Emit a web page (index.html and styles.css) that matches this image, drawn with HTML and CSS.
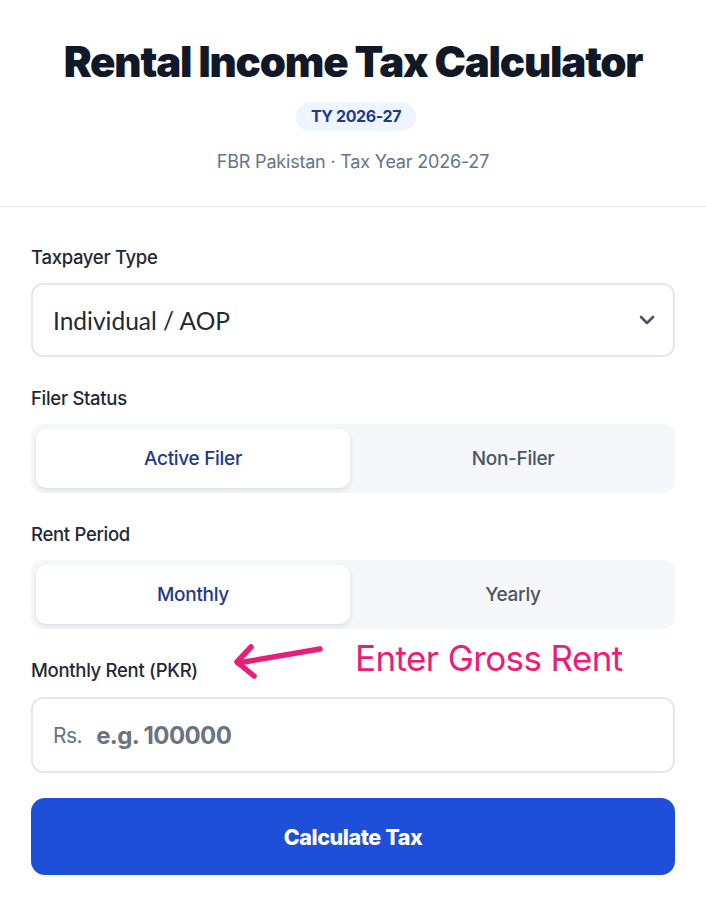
FILE: index.html
```html
<!DOCTYPE html>
<html lang="en">

<head>
    <meta charset="UTF-8">
    <meta name="viewport" content="width=device-width, initial-scale=1.0">
    <title>Rental Income Tax Calculator</title>
    <link rel="stylesheet" href="styles.css">
</head>

<body>
    <div class="header">
        <h1>Rental Income Tax Calculator</h1>
        <span class="badge">TY 2026-27</span>
        <p class="sub">FBR Pakistan · Tax Year 2026-27</p>
    </div>

    <form class="calc">
        <div class="field">
            <label class="lbl" for="type">Taxpayer Type</label>
            <div class="select">
                <span>Individual / AOP</span>
                <svg width="18" height="12" viewBox="0 0 18 12">
                    <path d="M3 3 L9 9 L15 3" fill="none" stroke="#4b5563" stroke-width="2.6" stroke-linecap="round" stroke-linejoin="round" />
                </svg>
            </div>
        </div>

        <div class="field">
            <div class="lbl">Filer Status</div>
            <div class="seg">
                <button type="button" class="opt active">Active Filer</button>
                <button type="button" class="opt">Non-Filer</button>
            </div>
        </div>

        <div class="field">
            <div class="lbl">Rent Period</div>
            <div class="seg">
                <button type="button" class="opt active">Monthly</button>
                <button type="button" class="opt">Yearly</button>
            </div>
        </div>

        <div class="field last">
            <div class="lbl rentlbl">
                Monthly Rent (PKR)
                <div class="hint">
                    <svg width="92" height="40" viewBox="0 0 92 40">
                        <path d="M87 6 L5 20" fill="none" stroke="#e91e78" stroke-width="5.5" stroke-linecap="round" />
                        <path d="M18 4 L4 19 L21 33" fill="none" stroke="#e91e78" stroke-width="5.5" stroke-linecap="round" stroke-linejoin="round" />
                    </svg>
                    <span>Enter Gross Rent</span>
                </div>
            </div>
            <div class="input">
                <span class="rs">Rs.</span>
                <span class="ph">e.g. 100000</span>
            </div>
        </div>

        <button type="button" class="calcbtn">Calculate Tax</button>
    </form>
</body>

</html>
```

FILE: styles.css
```css
* {
    box-sizing: border-box;
}

body {
    margin: 0;
    background-color: #ffffff;
    font-family: Inter, "Noto Sans", sans-serif;
    color: #1f2937;
}

.header {
    text-align: center;
    padding-top: 38px;
    padding-bottom: 32px;
    border-bottom: 1px solid #e5e7eb;
}

h1 {
    margin: 0;
    font-size: 42px;
    font-weight: 900;
    letter-spacing: -1.2px;
    line-height: 48px;
    color: #111827;
}

.badge {
    display: inline-block;
    margin-top: 16px;
    margin-left: 6px;
    padding: 0 15px;
    height: 29px;
    line-height: 29px;
    border-radius: 15px;
    background-color: #eff5ff;
    color: #1e3a8a;
    font-size: 16px;
    font-weight: 700;
    letter-spacing: -0.4px;
}

.sub {
    margin: 19px 0 0;
    font-size: 18px;
    line-height: 24px;
    color: #64748b;
    letter-spacing: -0.2px;
}

.calc {
    padding: 38px 31px 0;
}

.field {
    margin-bottom: 29px;
}

.field.last {
    margin-bottom: 25px;
}

.lbl {
    display: block;
    font-size: 18.5px;
    line-height: 24px;
    font-weight: 500;
    letter-spacing: -0.3px;
    color: #1f2937;
    margin-bottom: 14px;
}

.rentlbl {
    position: relative;
    margin-bottom: 15px;
}

.hint {
    position: absolute;
    left: 202px;
    top: -15px;
    display: flex;
    align-items: center;
    gap: 30px;
}

.hint span {
    font-size: 35px;
    font-weight: 400;
    color: #e91e78;
    letter-spacing: -0.6px;
    white-space: nowrap;
    margin-top: -10px;
}

.select {
    display: flex;
    align-items: center;
    justify-content: space-between;
    height: 74px;
    padding: 0 17px 0 20px;
    border: 2px solid #e5e7eb;
    border-radius: 12px;
    font-family: Lato, "Noto Sans", sans-serif;
    font-size: 24.5px;
    color: #1f2937;
}

.seg {
    display: flex;
    gap: 6px;
    padding: 5px;
    height: 69px;
    border-radius: 12px;
    background-color: #f5f7fa;
}

.opt {
    flex: 1;
    border: none;
    background: none;
    border-radius: 10px;
    font-family: Inter, "Noto Sans", sans-serif;
    font-size: 19px;
    font-weight: 500;
    letter-spacing: -0.3px;
    color: #4b5563;
}

.opt.active {
    background-color: #ffffff;
    color: #1e3a8a;
    box-shadow: 0 2px 5px rgba(15, 23, 42, 0.12);
}

.input {
    display: flex;
    align-items: center;
    gap: 14px;
    height: 76px;
    padding: 0 20px;
    border: 2px solid #e5e7eb;
    border-radius: 12px;
}

.rs {
    font-size: 21px;
    color: #64748b;
    letter-spacing: -0.5px;
}

.ph {
    font-size: 24px;
    font-weight: 700;
    color: #6b7280;
    letter-spacing: -0.6px;
}

.calcbtn {
    display: block;
    width: 100%;
    height: 77px;
    border: none;
    border-radius: 14px;
    background-color: #1d4fd8;
    color: #ffffff;
    font-family: Inter, "Noto Sans", sans-serif;
    font-size: 21.5px;
    font-weight: 800;
    letter-spacing: -0.4px;
}
```
